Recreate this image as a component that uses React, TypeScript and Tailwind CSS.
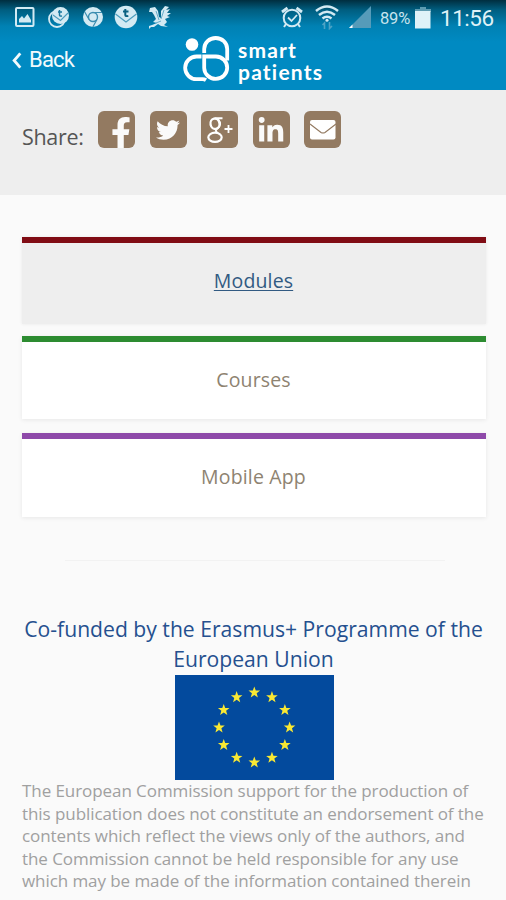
import type { ReactNode } from 'react';
import { FaFacebookF, FaTwitter, FaLinkedinIn } from 'react-icons/fa';

const ink = '#d3eaf3';

function PictureIcon() {
  return (
    <svg className="ml-[15px] h-5 w-5" viewBox="0 0 20 20">
      <rect x="1" y="1" width="17.5" height="18" rx="1" fill="none" stroke={ink} strokeWidth="2" />
      <path d="M4 15.5V12l3-3 2 2.5 3.5-4.5 3.5 6v2.500z" fill={ink} />
    </svg>
  );
}

function StackIcon() {
  return (
    <svg className="ml-[13px] h-[22px] w-[22px]" viewBox="0 0 22 22">
      <circle cx="9" cy="13" r="8" fill="none" stroke={ink} strokeWidth="1.800" />
      <circle cx="12.500" cy="9.500" r="8.500" fill={ink} />
      <path d="M5 9l7.500 5.500L20 7" fill="none" stroke="#4b9cbd" strokeWidth="1.100" />
      <path d="M11.500 4v5q0 1.500 2.500 1M10 6h4" fill="none" stroke="#17779f" strokeWidth="1.500" />
    </svg>
  );
}

function ChromeIcon() {
  return (
    <svg className="ml-[12px] h-[22px] w-[22px]" viewBox="0 0 22 22">
      <circle cx="11" cy="11" r="10" fill={ink} />
      <circle cx="11" cy="11" r="4.500" fill={ink} stroke="#3b8db0" strokeWidth="1.400" />
      <path d="M11 6.500h9M7 13.500L2.600 5.700M15 13.500L10.800 21" stroke="#3b8db0" strokeWidth="1.200" />
    </svg>
  );
}

function MailBadgeIcon() {
  return (
    <svg className="ml-[10px] h-6 w-6" viewBox="0 0 24 24">
      <circle cx="12" cy="12" r="11.300" fill={ink} />
      <path d="M1.500 9l10.500 8L22.500 9" fill="none" stroke="#4b9cbd" strokeWidth="1.200" />
      <path d="M11.300 4v6q0 1.500 3 1M9 6.500h5.500" fill="none" stroke="#096080" strokeWidth="2" />
    </svg>
  );
}

function DragonIcon() {
  return (
    <svg className="ml-[10px] h-6 w-6" viewBox="0 0 24 24" fill={ink}>
      <path d="M2 3l5-1 3 4 1 6 2 1 0-7 4-5 4 1-3 3 4-1-3 4 4 0-4 3 3 1-5 2 2 3-3 3 4 2-7-1-3-2-4 3H3l-2 2 0-3 3-1 5-2-4-1 3-3-2-4-2-3-3 0z" />
      <path d="M8 6l3 9M16 5l-3 9M8 18l5-2" stroke="#4b9cbd" strokeWidth=".8" />
    </svg>
  );
}

function AlarmIcon() {
  return (
    <svg className="h-[22px] w-[22px]" viewBox="0 0 22 22" fill="none" stroke={ink}>
      <circle cx="11" cy="12" r="8.300" strokeWidth="2" />
      <path d="M7 11.500l3.500 3.500 5.500-6" strokeWidth="1.800" />
      <path d="M1 6l5.500-4M15.500 2L21 6" strokeWidth="2.800" />
      <path d="M5 18l-2 3M17 18l2 3" strokeWidth="2" />
    </svg>
  );
}

function WifiIcon() {
  return (
    <svg className="ml-[11px] h-[26px] w-[26px]" viewBox="0 0 26 26" fill="none" stroke={ink}>
      <path d="M2 7Q13-2 24 7M5 11q8-6.500 16 0M8.500 14.500q4.500-3.500 9 0" strokeWidth="2.500" />
      <circle cx="13" cy="16.300" r="1.500" fill={ink} stroke="none" />
      <path d="M10.500 25v-6l-2 2M15.500 18v6.500l2.500-2.500" stroke="#4ea3c5" strokeWidth="1.600" />
    </svg>
  );
}

function SignalIcon() {
  return (
    <svg className="ml-[9px] h-[22px] w-[22px]" viewBox="0 0 22 22">
      <path d="M22 0v22H0z" fill="#569bb9" />
      <path d="M3.500 18.500V22H0z" fill="#fff" />
    </svg>
  );
}

function BatteryIcon() {
  return (
    <svg className="ml-[4px] h-[23px] w-4" viewBox="0 0 16 23">
      <path d="M5 1h6v2h5v3H0V3h5z" fill="#5d9bb1" />
      <path d="M0 5h15.500v17.500H0z" fill="#dff2f8" />
    </svg>
  );
}

function BrandMark() {
  return (
    <svg className="h-[49px] w-[48px]" viewBox="0 0 48 49" fill="none" stroke="#fff" strokeWidth="3.800">
      <circle cx="9" cy="10.500" r="6.300" fill="#fff" stroke="none" />
      <path d="M21.200 19V15a11.500 11 0 0 1 23 0V26.500" />
      <path d="M21.200 22.500H33a11.500 11.200 0 1 1-11.800 11.500z" />
      <path d="M18.500 22.500h-5a11.300 11.300 0 0 0 0 22.700h6q2 0 3.500 1" />
    </svg>
  );
}

function GooglePlusIcon() {
  return (
    <svg className="h-[30px] w-[28px]" viewBox="0 0 28 30" fill="none" stroke="#fff">
      <ellipse cx="9" cy="8.800" rx="4.500" ry="5.200" strokeWidth="2.300" transform="rotate(-12 9 8.800)" />
      <path d="M8.500 3.200h8M12 4.500q4.500 5-.5 9-3.500 2.500.5 4.700" strokeWidth="1.900" />
      <ellipse cx="9" cy="22.300" rx="6.700" ry="4.600" strokeWidth="2.200" />
      <path d="M22.500 10v8M18.500 14h8" strokeWidth="1.800" />
    </svg>
  );
}

function MailIcon() {
  return (
    <svg className="h-[20px] w-[26px]" viewBox="0 0 26 20">
      <rect width="25.500" height="19.500" rx="2" fill="#fff" />
      <path d="M0 4l11 8.500q2 1 4 0L26 4" fill="none" stroke="#937a61" strokeWidth="1.200" />
    </svg>
  );
}

function ShareTile({ children }: { children: ReactNode }) {
  return (
    <div className="flex h-[37px] w-[37px] shrink-0 items-center justify-center overflow-hidden rounded-[6px] bg-[#937a61] text-[#fafafa]">
      {children}
    </div>
  );
}

const starPoints = Array.from({ length: 10 }, (_, i) => {
  const r = i % 2 ? 2.5 : 6.1;
  const a = (i * Math.PI) / 5;
  return `${(r * Math.sin(a)).toFixed(2)},${(-r * Math.cos(a)).toFixed(2)}`;
}).join(' ');

function EuropeFlag() {
  return (
    <svg className="ml-[175px] mt-px block h-[105px] w-[159px]" viewBox="0 0 159 105">
      <rect width="159" height="105" fill="#034a9d" />
      {Array.from({ length: 12 }, (_, i) => {
        const a = (i * Math.PI) / 6;
        return (
          <polygon
            key={i}
            points={starPoints}
            fill="#f9e833"
            transform={`translate(${79.3 + 35.3 * Math.sin(a)} ${52.5 - 35 * Math.cos(a)})`}
          />
        );
      })}
    </svg>
  );
}

const disclaimer = [
  'The European Commission support for the production of',
  'this publication does not constitute an endorsement of the',
  'contents which reflect the views only of the authors, and',
  'the Commission cannot be held responsible for any use',
  'which may be made of the information contained therein',
];

export default function App() {
  return (
    <div className="h-[900px] w-[506px] overflow-hidden bg-[#fafafa] font-['Open_Sans',sans-serif]">
      <header className="h-[90px] bg-[linear-gradient(#002e3f_0,#005e80_10px,#0081b3_26px,#008ac2_42px)] font-[Roboto,sans-serif]">
        <div className="flex h-[34px] items-center">
          <PictureIcon />
          <StackIcon />
          <ChromeIcon />
          <MailBadgeIcon />
          <DragonIcon />
          <div className="ml-auto mr-[12px] flex items-center">
            <AlarmIcon />
            <WifiIcon />
            <SignalIcon />
            <span className="ml-[9px] mt-[3px] w-[31px] whitespace-nowrap text-[16.500px] leading-[20px] tracking-[-0.2px] text-[#c6e4ee]">89%</span>
            <BatteryIcon />
            <span className="ml-[9px] mt-[2px] w-[54px] whitespace-nowrap text-[22.500px] leading-[30px] tracking-[-0.5px] text-[#dff2f7]">11:56</span>
          </div>
        </div>
        <div className="flex h-[56px] items-start">
          <div className="mt-[12px] flex w-[183px] items-center text-[22px] leading-[28px] tracking-[-0.8px] text-[#f3fafc]">
            <svg className="ml-[12px] mr-[7px] h-[17px] w-[10px]" viewBox="0 0 10 18" fill="none" stroke="currentColor" strokeWidth="3">
              <path d="M8.500 1.500L2 9l6.500 7.500" />
            </svg>
            <span>Back</span>
          </div>
          <BrandMark />
          <div className="ml-[7px] mt-[5px] font-[Lato,sans-serif] text-[21px] font-bold leading-[21.500px] tracking-[1.200px] text-white">
            <div>smart</div>
            <div>patients</div>
          </div>
        </div>
      </header>

      <section className="flex h-[105px] items-start bg-[#eeeeee] pl-[22px]">
        <span className="mt-[31px] w-[76px] text-[21.500px] leading-[32px] tracking-[-0.3px] text-[#555555]">Share:</span>
        <div className="mt-[21px] flex gap-[14.500px]">
          <ShareTile><FaFacebookF className="ml-[8px] mt-[7px] h-[34px] w-[20px] shrink-0" /></ShareTile>
          <ShareTile><FaTwitter className="h-[24px] w-[24px]" /></ShareTile>
          <ShareTile><GooglePlusIcon /></ShareTile>
          <ShareTile><FaLinkedinIn className="mt-[3px] h-[28px] w-[28px]" /></ShareTile>
          <ShareTile><MailIcon /></ShareTile>
        </div>
      </section>

      <nav className="ml-[21.500px] mr-[20.500px] mt-[42px] text-center text-[19.500px] tracking-[0.15px] text-[#8e8371]">
        <a className="mb-[12px] flex h-[87px] items-center justify-center border-t-[6px] border-[#800c14] bg-[#eeeeee] pb-[5px] text-[#315a82] underline decoration-1 underline-offset-2 shadow-[0_0_3px_#e8e8e8]">Modules</a>
        <a className="mb-[14px] flex h-[83px] items-center justify-center border-t-[6px] border-[#2d8c31] bg-white pb-[2px] shadow-[0_1px_4px_#e7e7e7]">Courses</a>
        <a className="flex h-[84px] items-center justify-center border-t-[6px] border-[#8e49a9] bg-white pb-[3px] shadow-[0_1px_4px_#e7e7e7]">Mobile App</a>
      </nav>

      <div className="ml-[65px] mt-[43px] h-px w-[380px] bg-[#f2f2f2]" />

      <footer>
        <h2 className="mt-[53px] whitespace-nowrap pl-px text-center text-[21.150px] leading-[30px] text-[#25508f]">
          Co-funded by the Erasmus+ Programme of the<br />European Union
        </h2>
        <EuropeFlag />
        <div className="pl-[22px] text-[17px] leading-[22.500px] tracking-[-0.07px] text-[#a0a0a0]">
          {disclaimer.map((line) => (
            <div key={line} className="w-fit whitespace-nowrap">{line}</div>
          ))}
        </div>
      </footer>
    </div>
  );
}
